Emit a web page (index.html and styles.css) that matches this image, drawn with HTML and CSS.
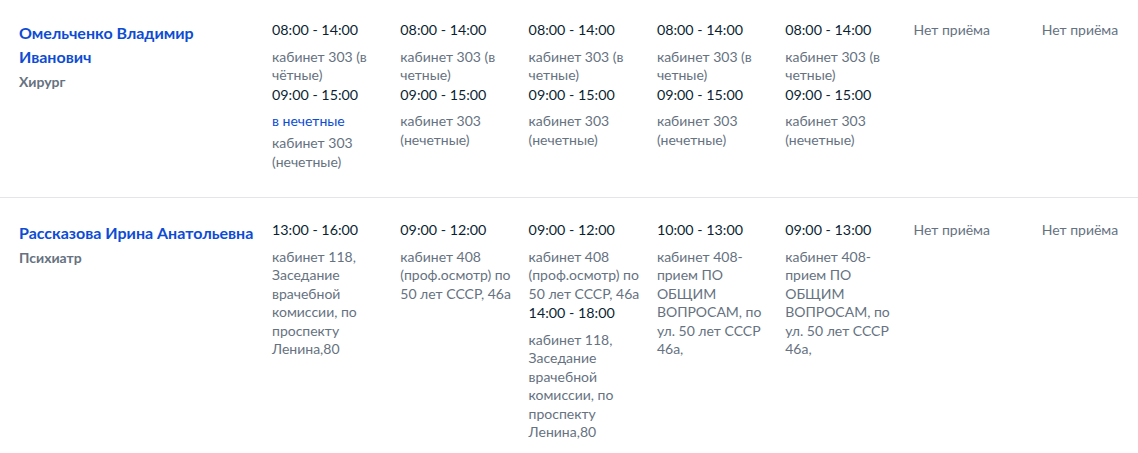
FILE: index.html
```html
<!DOCTYPE html>
<html lang="ru">
<head>
<meta charset="utf-8">
<title>Расписание</title>
<link rel="stylesheet" href="styles.css">
</head>
<body>
<div class="schedule">
  <div class="row first">
    <div class="doctor">
      <a class="name" href="#">Омельченко Владимир Иванович</a>
      <div class="spec">Хирург</div>
    </div>
    <div class="day">
      <div class="slot"><div class="time">08:00 - 14:00</div><div class="cab">кабинет 303 (в чётные)</div></div>
      <div class="slot"><div class="time">09:00 - 15:00</div><div class="note">в нечетные</div><div class="cab">кабинет 303 (нечетные)</div></div>
    </div>
    <div class="day">
      <div class="slot"><div class="time">08:00 - 14:00</div><div class="cab">кабинет 303 (в четные)</div></div>
      <div class="slot"><div class="time">09:00 - 15:00</div><div class="cab">кабинет 303 (нечетные)</div></div>
    </div>
    <div class="day">
      <div class="slot"><div class="time">08:00 - 14:00</div><div class="cab">кабинет 303 (в четные)</div></div>
      <div class="slot"><div class="time">09:00 - 15:00</div><div class="cab">кабинет 303 (нечетные)</div></div>
    </div>
    <div class="day">
      <div class="slot"><div class="time">08:00 - 14:00</div><div class="cab">кабинет 303 (в четные)</div></div>
      <div class="slot"><div class="time">09:00 - 15:00</div><div class="cab">кабинет 303 (нечетные)</div></div>
    </div>
    <div class="day">
      <div class="slot"><div class="time">08:00 - 14:00</div><div class="cab">кабинет 303 (в четные)</div></div>
      <div class="slot"><div class="time">09:00 - 15:00</div><div class="cab">кабинет 303 (нечетные)</div></div>
    </div>
    <div class="day"><div class="off">Нет приёма</div></div>
    <div class="day"><div class="off">Нет приёма</div></div>
  </div>
  <div class="row">
    <div class="doctor">
      <a class="name" href="#">Рассказова Ирина Анатольевна</a>
      <div class="spec">Психиатр</div>
    </div>
    <div class="day">
      <div class="slot"><div class="time">13:00 - 16:00</div><div class="cab">кабинет 118, Заседание врачебной комиссии, по проспекту Ленина,80</div></div>
    </div>
    <div class="day">
      <div class="slot"><div class="time">09:00 - 12:00</div><div class="cab">кабинет 408 (проф.осмотр) по 50 лет СССР, 46а</div></div>
    </div>
    <div class="day">
      <div class="slot"><div class="time">09:00 - 12:00</div><div class="cab">кабинет 408 (проф.осмотр) по 50 лет СССР, 46а</div></div>
      <div class="slot"><div class="time">14:00 - 18:00</div><div class="cab">кабинет 118, Заседание врачебной комиссии, по проспекту Ленина,80</div></div>
    </div>
    <div class="day">
      <div class="slot"><div class="time">10:00 - 13:00</div><div class="cab">кабинет 408-прием ПО ОБЩИМ ВОПРОСАМ, по ул. 50 лет СССР 46а,</div></div>
    </div>
    <div class="day">
      <div class="slot"><div class="time">09:00 - 13:00</div><div class="cab">кабинет 408-прием ПО ОБЩИМ ВОПРОСАМ, по ул. 50 лет СССР 46а,</div></div>
    </div>
    <div class="day"><div class="off">Нет приёма</div></div>
    <div class="day"><div class="off">Нет приёма</div></div>
  </div>
</div>
</body>
</html>
```
FILE: styles.css
```css
html, body {
  margin: 0;
  padding: 0;
  background: #ffffff;
}
body {
  font-family: Lato, "Noto Sans", sans-serif;
  color: #0b1f33;
  overflow: hidden;
}
.schedule {
  display: flex;
  flex-direction: column;
}
.row {
  display: grid;
  grid-template-columns: 253px repeat(6, 128.3px) 1fr;
  padding: 22px 0 26px 19px;
  border-bottom: 1px solid #e3e5e8;
}
.row.first {
  padding-top: 20px;
}
.doctor {
  padding-right: 14px;
  padding-top: 1px;
}
.name {
  display: block;
  font-size: 16px;
  line-height: 24px;
  font-weight: 700;
  color: #0d4cd3;
  text-decoration: none;
}
.spec {
  margin-top: 4px;
  font-size: 14px;
  line-height: 18px;
  font-weight: 700;
  color: #66727f;
}
.day {
  padding-right: 12px;
}
.time {
  font-size: 14.3px;
  line-height: 20px;
  color: #0b1f33;
}
.note {
  margin-top: 7px;
  font-size: 14px;
  line-height: 18.5px;
  color: #0d4cd3;
}
.cab {
  margin-top: 7.5px;
  font-size: 14px;
  line-height: 18.5px;
  color: #66727f;
}
.note + .cab {
  margin-top: 4px;
}
.off {
  font-size: 14px;
  line-height: 20px;
  color: #66727f;
}
```
